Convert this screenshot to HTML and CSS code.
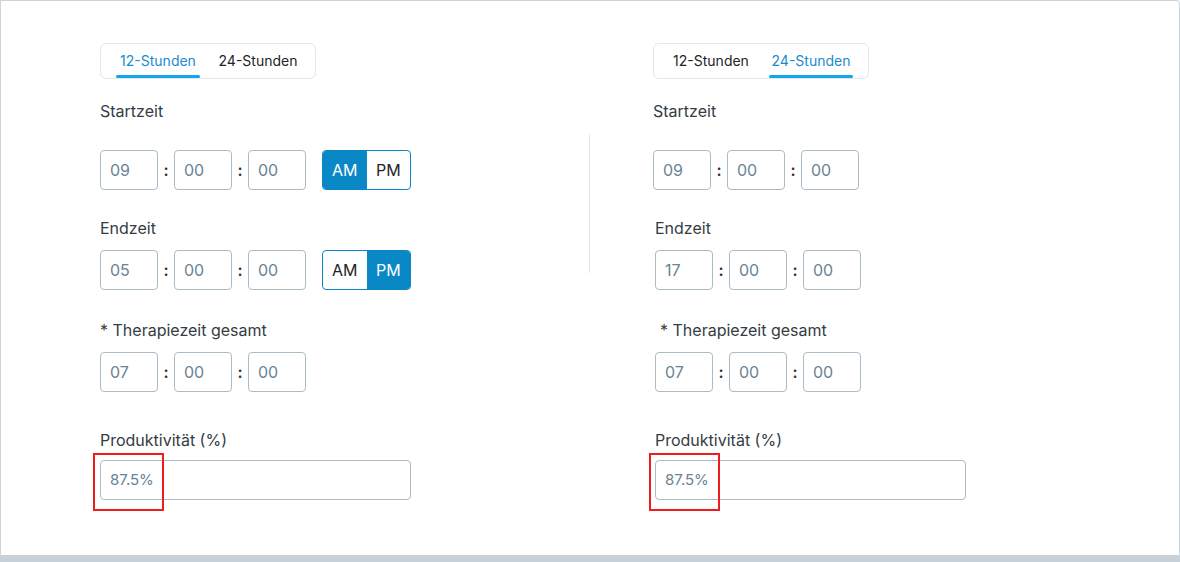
FILE: index.html
```html
<!DOCTYPE html>
<html lang="de">
<head>
<meta charset="utf-8">
<title>Therapiezeit</title>
<link rel="stylesheet" href="styles.css">
</head>
<body>
<div class="card">
  <section class="col col-left">
    <div class="tabs">
      <span class="tab active">12-Stunden</span>
      <span class="tab">24-Stunden</span>
    </div>
    <div class="label l-start">Startzeit</div>
    <div class="row r-start">
      <span class="box">09</span><span class="colon">:</span><span class="box">00</span><span class="colon">:</span><span class="box">00</span>
      <div class="ampm"><span class="seg on">AM</span><span class="seg">PM</span></div>
    </div>
    <div class="label l-next">Endzeit</div>
    <div class="row">
      <span class="box">05</span><span class="colon">:</span><span class="box">00</span><span class="colon">:</span><span class="box">00</span>
      <div class="ampm"><span class="seg">AM</span><span class="seg on">PM</span></div>
    </div>
    <div class="label l-ther">* Therapiezeit gesamt</div>
    <div class="row">
      <span class="box">07</span><span class="colon">:</span><span class="box">00</span><span class="colon">:</span><span class="box">00</span>
    </div>
    <div class="label l-prod">Produktivität (%)</div>
    <div class="field">
      <span class="input">87.5%</span>
      <span class="mark"></span>
    </div>
  </section>
  <div class="divider"></div>
  <section class="col col-right">
    <div class="tabs">
      <span class="tab">12-Stunden</span>
      <span class="tab active">24-Stunden</span>
    </div>
    <div class="label l-start">Startzeit</div>
    <div class="row r-start">
      <span class="box">09</span><span class="colon">:</span><span class="box">00</span><span class="colon">:</span><span class="box">00</span>
    </div>
    <div class="label l-next shift">Endzeit</div>
    <div class="row shift">
      <span class="box">17</span><span class="colon">:</span><span class="box">00</span><span class="colon">:</span><span class="box">00</span>
    </div>
    <div class="label l-ther shift-more">* Therapiezeit gesamt</div>
    <div class="row shift">
      <span class="box">07</span><span class="colon">:</span><span class="box">00</span><span class="colon">:</span><span class="box">00</span>
    </div>
    <div class="label l-prod shift">Produktivität (%)</div>
    <div class="field shift">
      <span class="input">87.5%</span>
      <span class="mark"></span>
    </div>
  </section>
</div>
</body>
</html>
```
FILE: styles.css
```css
* { box-sizing: border-box; }
html, body { margin: 0; padding: 0; background: #ffffff; }
body {
  font-family: Inter, "Noto Sans", "Liberation Sans", sans-serif;
  color: #353c43;
}
.card {
  width: 1180px;
  height: 562px;
  border: 1px solid #cbd5dd;
  border-bottom: 7px solid #c6d1d9;
  border-top-right-radius: 4px;
  padding: 42px 0 0 99px;
  display: flex;
  align-items: flex-start;
}
.col { display: flex; flex-direction: column; align-items: flex-start; }
.col-left { width: 489px; }
.col-right { padding-left: 63px; }
.divider {
  width: 1px;
  height: 139px;
  margin-top: 91px;
  background: #e4e8eb;
}
.tabs {
  display: flex;
  gap: 16px;
  height: 36px;
  width: 216px;
  padding: 0 15px;
  border: 1px solid #e2e8ec;
  border-radius: 6px;
}
.tab {
  width: 84px;
  text-align: center;
  font-size: 14px;
  line-height: 34px;
  color: #1f2427;
  position: relative;
}
.tab.active { color: #1a8ccc; }
.tab.active::after {
  content: "";
  position: absolute;
  left: 0; right: 0; bottom: 0;
  height: 3px;
  border-radius: 2px;
  background: #11a6ee;
}
.label {
  font-size: 16px;
  line-height: 20px;
  color: #353c43;
}
.l-start { margin-top: 22px; }
.l-next { margin-top: 28px; }
.l-ther { margin-top: 30px; }
.l-prod { margin-top: 38px; }
.row {
  display: flex;
  align-items: center;
  margin-top: 12px;
  height: 40px;
}
.r-start { margin-top: 29px; }
.box {
  width: 58px;
  height: 40px;
  border: 1px solid #aabbc6;
  border-radius: 4px;
  padding-left: 9px;
  font-size: 16px;
  line-height: 38px;
  color: #6a8395;
}
.colon {
  width: 16px;
  text-align: center;
  font-size: 16px;
  font-weight: 600;
  color: #2d3338;
}
.ampm {
  display: flex;
  margin-left: 16px;
  width: 89px;
  height: 40px;
  border: 1px solid #0a88c6;
  border-radius: 4px;
  overflow: hidden;
}
.seg {
  flex: 1;
  text-align: center;
  font-size: 16px;
  line-height: 38px;
  color: #1f2427;
}
.seg.on { background: #0a88c6; color: #ffffff; }
.field {
  position: relative;
  margin-top: 10px;
}
.input {
  display: block;
  width: 311px;
  height: 40px;
  border: 1px solid #aabbc6;
  border-radius: 4px;
  padding-left: 9px;
  font-size: 15px;
  line-height: 38px;
  color: #6a8395;
}
.mark {
  position: absolute;
  left: -7px;
  top: -7px;
  width: 71px;
  height: 58px;
  border: 2px solid #ee1c1c;
}
.shift { margin-left: 2px; }
.shift-more { margin-left: 7px; }
.col-right .mark { left: -6px; }
```
